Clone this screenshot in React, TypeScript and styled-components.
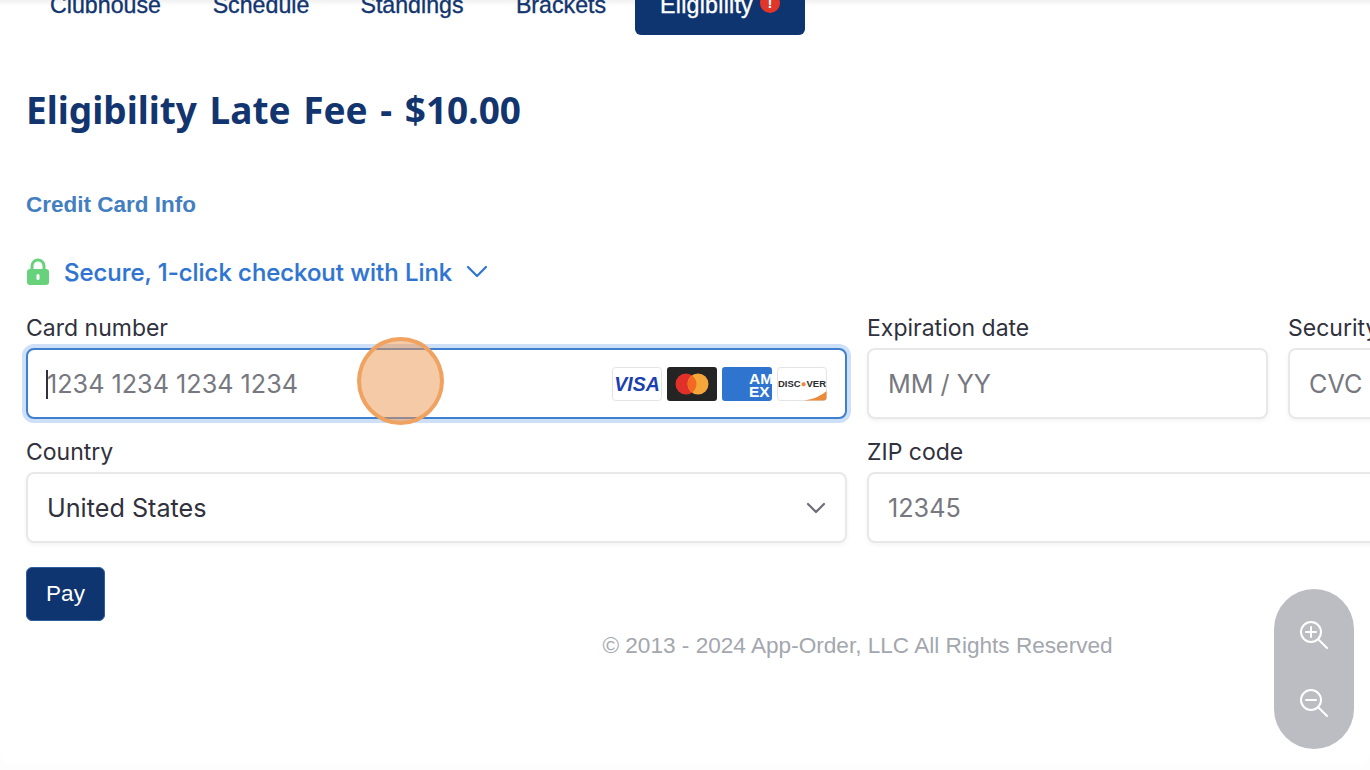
import React from 'react';
import styled, { createGlobalStyle } from 'styled-components';

const GlobalStyle = createGlobalStyle`
  html, body {
    margin: 0;
    padding: 0;
    width: 1370px;
    height: 770px;
    overflow: hidden;
    background: #fdfdfd;
  }
  * { box-sizing: border-box; }
`;

const Page = styled.div`
  position: relative;
  width: 1370px;
  height: 765px;
  overflow: hidden;
  background: #fff;
  border-radius: 0 0 12px 12px;
  font-family: 'Liberation Sans', Arial, sans-serif;
`;

const TopShade = styled.div`
  position: absolute;
  left: 0;
  right: 0;
  top: 0;
  height: 6px;
  background: linear-gradient(#f0f0f0, #ffffff);
`;

const Content = styled.div`
  position: relative;
  width: 1689px;
  padding-left: 26px;
`;

const Tabs = styled.div`
  display: flex;
  height: 35px;
  align-items: stretch;
`;

const Tab = styled.div<{ $active?: boolean; $width: number }>`
  display: flex;
  align-items: flex-start;
  justify-content: center;
  gap: 7px;
  flex: none;
  width: ${p => p.$width}px;
  margin-top: -8px;
  height: 43px;
  line-height: 26px;
  font-size: 23.2px;
  -webkit-text-stroke: 0.35px currentColor;
  color: ${p => (p.$active ? '#ffffff' : '#12356f')};
  background: ${p => (p.$active ? '#0f3570' : 'transparent')};
  border-radius: 0 0 6px 6px;
`;

const TabLabel = styled.span<{ $active?: boolean }>`
  letter-spacing: ${p => (p.$active ? '0.25px' : '0')};
`;

const AlertDot = styled.span`
  display: inline-flex;
  align-items: center;
  justify-content: center;
  width: 20px;
  height: 20px;
  margin-top: 1px;
  border-radius: 50%;
  background: #e2352a;
  color: #fff;
  font-size: 15px;
  font-weight: 700;
  -webkit-text-stroke: 0;
  line-height: 20px;
`;

const Title = styled.h1`
  margin: 49px 0 0;
  height: 52px;
  line-height: 52px;
  font-family: 'Noto Sans', 'DejaVu Sans', sans-serif;
  font-size: 37px;
  font-weight: 700;
  word-spacing: 3px;
  color: #12356f;
`;

const SectionLabel = styled.div`
  margin-top: 56px;
  height: 26px;
  line-height: 26px;
  font-size: 22.5px;
  font-weight: 700;
  color: #437fc0;
`;

const LinkRow = styled.div`
  display: flex;
  align-items: center;
  height: 30px;
  margin-top: 39px;
  font-family: Inter, sans-serif;
  font-size: 23.9px;
  font-weight: 500;
  -webkit-text-stroke: 0.2px currentColor;
  color: #2f74d0;
`;

const LockIcon = styled.svg`
  width: 24px;
  height: 28px;
  margin-right: 14px;
  flex: none;
`;

const LinkChevron = styled.svg`
  width: 24px;
  height: 24px;
  margin-left: 13px;
  flex: none;
`;

const FormRow = styled.div<{ $top: number }>`
  display: flex;
  gap: 20px;
  margin-top: ${p => p.$top}px;
`;

const Field = styled.div<{ $width: number }>`
  width: ${p => p.$width}px;
  flex: none;
`;

const Label = styled.div`
  height: 28px;
  line-height: 28px;
  margin-bottom: 6px;
  font-family: Inter, sans-serif;
  font-size: 23px;
  color: #30313d;
`;

const Input = styled.div<{ $focused?: boolean }>`
  position: relative;
  display: flex;
  align-items: center;
  justify-content: space-between;
  height: 71px;
  padding: 0 19px;
  background: #fff;
  font-family: Inter, sans-serif;
  font-size: 25.2px;
  border-radius: 8px;
  border: ${p => (p.$focused ? '2px solid #3f7fd0' : '2px solid #e8e8e8')};
  box-shadow: ${p =>
    p.$focused
      ? '0 0 0 4px rgba(92, 150, 232, 0.3)'
      : '0 2px 4px rgba(0, 0, 0, 0.05)'};
`;

const Placeholder = styled.span`
  color: #77787f;
`;

const Value = styled.span`
  color: #30313d;
`;

const Caret = styled.span`
  position: absolute;
  left: 18px;
  top: 20px;
  width: 1.5px;
  height: 29px;
  background: #30313d;
`;

const CardBrands = styled.div`
  display: flex;
  gap: 5px;
  margin-right: -1px;
`;

const BrandIcon = styled.svg`
  width: 50px;
  height: 34px;
  display: block;
`;

const SelectChevron = styled.svg`
  width: 24px;
  height: 24px;
  margin-right: -2px;
  flex: none;
`;

const PayButton = styled.button`
  display: block;
  width: 79px;
  height: 54px;
  margin-top: 24px;
  padding: 0;
  border: 1px solid #2f5f9e;
  border-radius: 6px;
  background: #0f3570;
  color: #fff;
  font-family: 'Liberation Sans', Arial, sans-serif;
  font-size: 22.5px;
`;

const Footer = styled.div`
  margin-top: 11px;
  text-align: center;
  line-height: 28px;
  font-size: 22.6px;
  color: #a3a7ae;
`;

const ClickRing = styled.div`
  position: absolute;
  left: 357px;
  top: 337px;
  width: 87px;
  height: 88px;
  border-radius: 50%;
  border: 4px solid #f0a260;
  background: rgba(236, 150, 80, 0.5);
`;

const ZoomPill = styled.div`
  position: absolute;
  left: 1274px;
  top: 589px;
  width: 80px;
  height: 160px;
  display: flex;
  flex-direction: column;
  align-items: center;
  justify-content: space-between;
  padding: 31px 0 31px;
  border-radius: 40px;
  background: #bcbdc2;
`;

const ZoomIcon = styled.svg`
  width: 30px;
  height: 30px;
  display: block;
`;

const Visa = () => (
  <BrandIcon viewBox="0 0 50 34">
    <rect x="0.5" y="0.5" width="49" height="33" rx="3" fill="#fff" stroke="#e3e3e3" />
    <text x="25" y="23.5" textAnchor="middle" fontFamily="Liberation Sans" fontSize="19.5" fontWeight="700" fontStyle="italic" fill="#1a3fae">VISA</text>
  </BrandIcon>
);

const Mastercard = () => (
  <BrandIcon viewBox="0 0 50 34">
    <rect width="50" height="34" rx="3" fill="#242424" />
    <circle cx="19" cy="17" r="10.5" fill="#e0302a" />
    <circle cx="31" cy="17" r="10.5" fill="#f4a63a" />
    <path d="M25 8.4a10.5 10.5 0 0 1 0 17.2a10.5 10.5 0 0 1 0-17.2z" fill="#f26a22" />
  </BrandIcon>
);

const Amex = () => (
  <BrandIcon viewBox="0 0 50 34">
    <rect width="50" height="34" rx="3" fill="#2f74cf" />
    <text x="27" y="17" fontFamily="Liberation Sans" fontSize="15.5" fontWeight="700" fill="#fff">AM</text>
    <text x="27" y="30" fontFamily="Liberation Sans" fontSize="15.5" fontWeight="700" fill="#fff">EX</text>
  </BrandIcon>
);

const Discover = () => (
  <BrandIcon viewBox="0 0 50 34">
    <rect x="0.5" y="0.5" width="49" height="33" rx="3" fill="#fff" stroke="#e3e3e3" />
    <path d="M27 33.5C38 32 45 28 49.5 24V30.5a3 3 0 0 1-3 3z" fill="#ec8a3c" />
    <text x="25" y="20" textAnchor="middle" fontFamily="Liberation Sans" fontSize="9.5" fontWeight="700" fill="#2a2a2a">DISC<tspan fill="#ec8a3c">●</tspan>VER</text>
  </BrandIcon>
);

const App = () => {
  return (
    <Page>
      <GlobalStyle />
      <TopShade />
      <Content>
        <Tabs>
          <Tab $width={159}>Clubhouse</Tab>
          <Tab $width={152}>Schedule</Tab>
          <Tab $width={150}>Standings</Tab>
          <Tab $width={148}>Brackets</Tab>
          <Tab $width={170} $active>
            <TabLabel $active>Eligibility</TabLabel>
            <AlertDot>!</AlertDot>
          </Tab>
        </Tabs>
        <Title>Eligibility Late Fee - $10.00</Title>
        <SectionLabel>Credit Card Info</SectionLabel>
        <LinkRow>
          <LockIcon viewBox="0 0 24 28">
            <path d="M6 12V8a6 6 0 0 1 12 0v4" fill="none" stroke="#68d17c" strokeWidth="3" />
            <rect x="1" y="11" width="22" height="16" rx="3" fill="#68d17c" />
            <rect x="10.5" y="16" width="3" height="6" rx="1.5" fill="#fff" />
          </LockIcon>
          Secure, 1-click checkout with Link
          <LinkChevron viewBox="0 0 24 24">
            <path d="M3 7l9 9 9-9" fill="none" stroke="#2f74d0" strokeWidth="2.2" strokeLinecap="round" strokeLinejoin="round" />
          </LinkChevron>
        </LinkRow>
        <FormRow $top={27}>
          <Field $width={821}>
            <Label>Card number</Label>
            <Input $focused>
              <Caret />
              <Placeholder>1234 1234 1234 1234</Placeholder>
              <CardBrands>
                <Visa />
                <Mastercard />
                <Amex />
                <Discover />
              </CardBrands>
            </Input>
          </Field>
          <Field $width={401}>
            <Label>Expiration date</Label>
            <Input>
              <Placeholder>MM / YY</Placeholder>
            </Input>
          </Field>
          <Field $width={401}>
            <Label>Security code</Label>
            <Input>
              <Placeholder>CVC</Placeholder>
            </Input>
          </Field>
        </FormRow>
        <FormRow $top={19}>
          <Field $width={821}>
            <Label>Country</Label>
            <Input>
              <Value>United States</Value>
              <SelectChevron viewBox="0 0 24 24">
                <path d="M4 8l8 8 8-8" fill="none" stroke="#6d6e78" strokeWidth="2.2" strokeLinecap="round" strokeLinejoin="round" />
              </SelectChevron>
            </Input>
          </Field>
          <Field $width={822}>
            <Label>ZIP code</Label>
            <Input>
              <Placeholder>12345</Placeholder>
            </Input>
          </Field>
        </FormRow>
        <PayButton>Pay</PayButton>
        <Footer>© 2013 - 2024 App-Order, LLC All Rights Reserved</Footer>
      </Content>
      <ClickRing />
      <ZoomPill>
        <ZoomIcon viewBox="0 0 30 30">
          <circle cx="12" cy="12" r="10" fill="none" stroke="#fff" strokeWidth="2" />
          <path d="M19.5 19.5L28 28M12 7v10M7 12h10" fill="none" stroke="#fff" strokeWidth="2" strokeLinecap="round" />
        </ZoomIcon>
        <ZoomIcon viewBox="0 0 30 30">
          <circle cx="12" cy="12" r="10" fill="none" stroke="#fff" strokeWidth="2" />
          <path d="M19.5 19.5L28 28M7 12h10" fill="none" stroke="#fff" strokeWidth="2" strokeLinecap="round" />
        </ZoomIcon>
      </ZoomPill>
    </Page>
  );
};

export default App;
